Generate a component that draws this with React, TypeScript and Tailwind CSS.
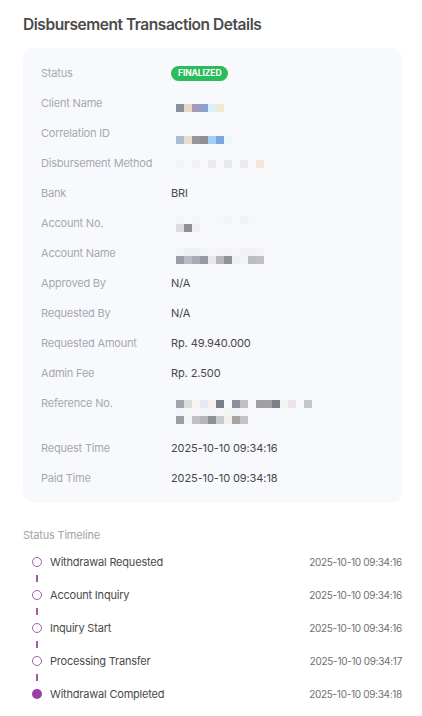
import React from 'react'

const badge = (
  <span className="inline-flex items-center justify-center h-[15px] px-[7px] rounded-full bg-[#2bbd5c] text-white text-[8.5px] font-bold tracking-[-0.1px]">
    FINALIZED
  </span>
)

// pixelated (censored) values, 8px cells
function Pixels({ rows, spaced }: { rows: string[][]; spaced?: boolean }) {
  return (
    <div className="flex flex-col ml-[5px]">
      {rows.map((r, i) => (
        <div key={i} className="flex h-[8px]">
          {r.map((c, j) => (
            <div
              key={j}
              className={spaced ? 'w-[8px] h-[8px] mr-[8px]' : 'w-[8px] h-[8px]'}
              style={{ backgroundColor: c }}
            />
          ))}
        </div>
      ))}
    </div>
  )
}

const bg = 'transparent'

const rows: { label: string; value?: React.ReactNode; pixels?: React.ReactNode; tall?: boolean }[] = [
  { label: 'Status', value: badge },
  {
    label: 'Client Name',
    pixels: (
      <div className="mt-[16px]">
        <Pixels rows={[['#8a8fa0', '#e8d8c8', '#a89ab8', '#8aa0d0', '#d8f0f8', '#f0e8d0']]} />
      </div>
    ),
  },
  {
    label: 'Correlation ID',
    pixels: (
      <div className="mt-[18px]">
        <Pixels rows={[['#a8bcd4', '#e6dccf', '#96949e', '#8f8f94', '#a6cdf5', '#7aa6dc', '#eaf6fc']]} />
      </div>
    ),
  },
  {
    label: 'Disbursement Method',
    pixels: (
      <div className="mt-[12px]">
        <Pixels spaced rows={[['#f1f4fa', '#f1f1f4', '#eaeaee', '#e7e8ed', '#eaeaef', '#f5e6d8']]} />
      </div>
    ),
  },
  { label: 'Bank', value: 'BRI' },
  {
    label: 'Account No.',
    pixels: (
      <div className="mt-[8px]">
        <Pixels
          rows={[
            ['#f4f5f9', '#f6f8fc', '#f4f5f9', bg, bg, '#f6f7fb', '#f2f3f7', bg, '#f1f2f6', '#f5f6fa'],
            ['#dcdce2', '#8e8e94', '#f0f0f4'],
          ]}
        />
      </div>
    ),
  },
  {
    label: 'Account Name',
    pixels: (
      <div className="mt-[10px]">
        <Pixels
          rows={[
            ['#f4f5f9', '#eef0f6', '#eef0f5', '#f2f3f7', '#f7f7fa', '#f6f4f6', '#f3f2f5', '#f6f5f7', '#f1f1f4', '#f2f2f5', '#f4f4f7'],
            ['#9c9ca2', '#b8bcc6', '#a8acb6', '#9a9aa0', '#e8e8ec', '#b8b8bc', '#8e909a', '#f0f0f4', '#f4f4f6', '#babec6', '#c0c0c4'],
          ]}
        />
      </div>
    ),
  },
  { label: 'Approved By', value: 'N/A' },
  { label: 'Requested By', value: 'N/A' },
  { label: 'Requested Amount', value: 'Rp. 49.940.000' },
  { label: 'Admin Fee', value: 'Rp. 2.500' },
  {
    label: 'Reference No.',
    tall: true,
    pixels: (
      <div className="mt-[12px]">
        <Pixels
          rows={[
            ['#a0a4ac', '#dcdcdc', '#f8f4f0', '#e4eaf4', '#f6f0ee', '#7a808a', bg, '#8c909a', '#c0c0c0', bg, '#a0a0a4', '#a0a2a6', '#7e8088', '#f4f4f2', '#ece4e6', bg, '#c4c6ca'],
            ['#f3f5f8', '#f6f7f9', '#f7f6f6', '#f4f5f8', '#f3f4f7', '#f6f6f8', '#f5f4f5', '#f3f4f6', '#f6f6f8'],
            ['#9a9ea4', '#f4f4f4', '#c0c0c0', '#b4b6ba', '#8e9096', '#c8cacc', '#f4eeee', '#a8a4a4', '#c4c4c4'],
          ]}
        />
      </div>
    ),
  },
  { label: 'Request Time', value: '2025-10-10 09:34:16' },
  { label: 'Paid Time', value: '2025-10-10 09:34:18' },
]

const timeline = [
  { name: 'Withdrawal Requested', time: '2025-10-10 09:34:16' },
  { name: 'Account Inquiry', time: '2025-10-10 09:34:16' },
  { name: 'Inquiry Start', time: '2025-10-10 09:34:16' },
  { name: 'Processing Transfer', time: '2025-10-10 09:34:17' },
  { name: 'Withdrawal Completed', time: '2025-10-10 09:34:18', done: true },
]

export default function App() {
  return (
    <div className="bg-white pl-[23px] pr-[20px] pt-[15px] font-['Inter',sans-serif] text-[#4a4a4a]">
      <h1 className="text-[15.5px] leading-[20px] font-semibold text-[#4b4b4b] tracking-[-0.45px]">
        Disbursement Transaction Details
      </h1>

      {/* details card */}
      <div className="mt-[13px] rounded-[10px] bg-[#f8f9fd] pl-[18px] pr-4 py-[10px]">
        {rows.map((r) => (
          <div key={r.label} className={`flex ${r.tall ? 'h-[45px]' : 'h-[30px]'}`}>
            <div className="w-[130px] h-[30px] flex items-center text-[11px] text-[#a6a8b0] tracking-[-0.2px]">
              {r.label}
            </div>
            {r.pixels ? (
              r.pixels
            ) : (
              <div className="h-[30px] flex items-center text-[11px] text-[#474747] tracking-[-0.1px]">
                {r.value}
              </div>
            )}
          </div>
        ))}
      </div>

      <p className="mt-[25px] text-[11px] leading-[14px] text-[#a3a3a3] tracking-[-0.2px]">Status Timeline</p>

      {/* timeline */}
      <div className="mt-[12px] pb-[6px]">
        {timeline.map((t, i) => (
          <div key={t.name}>
            <div className="flex items-center h-[16px]">
              <div className="w-[27px] flex justify-center pl-[1px]">
                {t.done ? (
                  <span className="w-[10px] h-[10px] rounded-full bg-[#9a3fa4]" />
                ) : (
                  <span className="w-[10px] h-[10px] rounded-full border-[1.5px] border-[#a061b0]" />
                )}
              </div>
              <span className="flex-1 text-[11px] text-[#4a4a4a] tracking-[-0.2px]">{t.name}</span>
              <span className="text-[10px] text-[#707070] tracking-[-0.3px]">{t.time}</span>
            </div>
            {i < timeline.length - 1 && (
              <div className="h-[17px] w-[27px] flex items-center justify-center pl-[1px]">
                <span className="w-[2px] h-[7px] bg-[#a45aa8]" />
              </div>
            )}
          </div>
        ))}
      </div>
    </div>
  )
}
